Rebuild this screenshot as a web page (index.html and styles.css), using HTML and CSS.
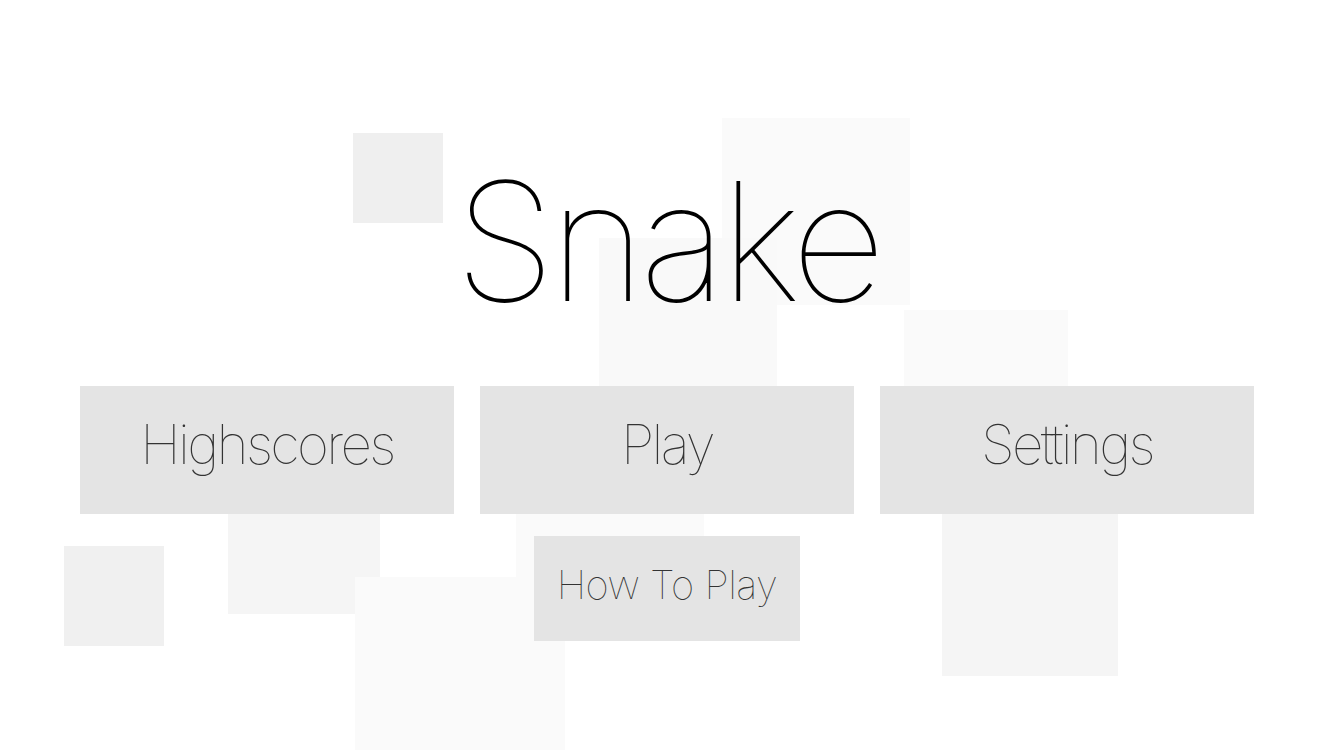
FILE: index.html
```html
<!DOCTYPE html>
<html lang="en">
<head>
<meta charset="utf-8">
<title>Snake</title>
<link rel="stylesheet" href="styles.css">
</head>
<body>
<div class="backdrop" aria-hidden="true">
  <div class="sq sq-a"></div>
  <div class="sq sq-b"></div>
  <div class="sq sq-c"></div>
  <div class="sq sq-d"></div>
  <div class="sq sq-e"></div>
  <div class="sq sq-f"></div>
  <div class="sq sq-g"></div>
  <div class="sq sq-h"></div>
  <div class="sq sq-i"></div>
</div>
<main class="menu">
  <h1 class="title">Snake</h1>
  <div class="row">
    <button class="btn btn-main">Highscores</button>
    <button class="btn btn-main">Play</button>
    <button class="btn btn-main">Settings</button>
  </div>
  <button class="btn btn-small">How To Play</button>
</main>
</body>
</html>
```
FILE: styles.css
```css
html, body {
  margin: 0;
  padding: 0;
  background: #ffffff;
}
body {
  width: 1334px;
  height: 750px;
  overflow: hidden;
  position: relative;
  font-family: Inter, "Liberation Sans", sans-serif;
}
.backdrop {
  position: absolute;
  inset: 0;
  z-index: 0;
}
.sq {
  position: absolute;
}
.sq-a { left: 353px; top: 133px; width: 90px; height: 90px; background: #efefef; }
.sq-b { left: 722px; top: 118px; width: 188px; height: 187px; background: #fafafa; }
.sq-c { left: 599px; top: 238px; width: 178px; height: 178px; background: #f9f9f9; }
.sq-d { left: 904px; top: 310px; width: 164px; height: 164px; background: #fafafa; }
.sq-e { left: 64px; top: 546px; width: 100px; height: 100px; background: #f0f0f0; }
.sq-f { left: 228px; top: 462px; width: 152px; height: 152px; background: #f5f5f5; }
.sq-g { left: 355px; top: 577px; width: 210px; height: 210px; background: #fafafa; }
.sq-h { left: 516px; top: 430px; width: 188px; height: 188px; background: #fafafa; }
.sq-i { left: 942px; top: 500px; width: 176px; height: 176px; background: #f5f5f5; }

.menu {
  position: relative;
  z-index: 1;
  display: flex;
  flex-direction: column;
  align-items: center;
  padding: 159px 80px 0;
}
.title {
  margin: 0;
  font-size: 165px;
  line-height: 165px;
  font-weight: 100;
  color: #000;
  letter-spacing: -6px;
}
.row {
  margin-top: 62px;
  width: 100%;
  display: flex;
  gap: 26px;
}
.btn {
  border: none;
  background: #e4e4e4;
  color: #333;
  font-family: inherit;
  font-weight: 100;
  padding: 0;
  display: flex;
  align-items: center;
  justify-content: center;
}
.btn-main {
  flex: 1;
  height: 128px;
  padding-bottom: 12px;
  font-size: 55px;
  letter-spacing: -2.7px;
}
.btn-small {
  margin-top: 22px;
  width: 266px;
  height: 105px;
  padding-bottom: 8px;
  font-size: 40px;
  letter-spacing: -0.5px;
}
```
